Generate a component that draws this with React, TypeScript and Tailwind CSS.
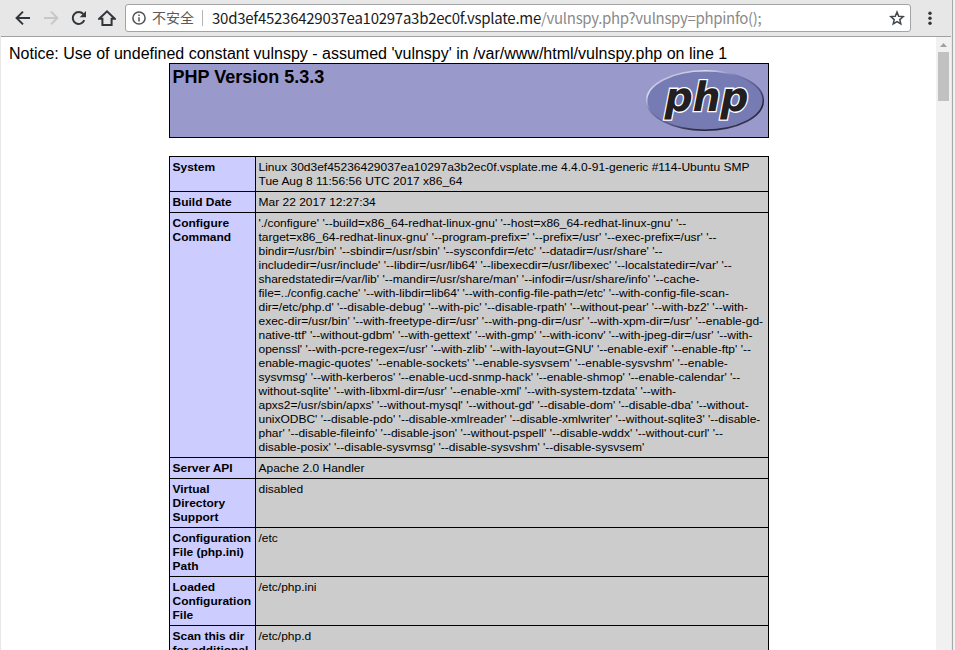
const CONFIGURE_LINES = [
  "'./configure' '--build=x86_64-redhat-linux-gnu' '--host=x86_64-redhat-linux-gnu' '--",
  "target=x86_64-redhat-linux-gnu' '--program-prefix=' '--prefix=/usr' '--exec-prefix=/usr' '--",
  "bindir=/usr/bin' '--sbindir=/usr/sbin' '--sysconfdir=/etc' '--datadir=/usr/share' '--",
  "includedir=/usr/include' '--libdir=/usr/lib64' '--libexecdir=/usr/libexec' '--localstatedir=/var' '--",
  "sharedstatedir=/var/lib' '--mandir=/usr/share/man' '--infodir=/usr/share/info' '--cache-",
  "file=../config.cache' '--with-libdir=lib64' '--with-config-file-path=/etc' '--with-config-file-scan-",
  "dir=/etc/php.d' '--disable-debug' '--with-pic' '--disable-rpath' '--without-pear' '--with-bz2' '--with-",
  "exec-dir=/usr/bin' '--with-freetype-dir=/usr' '--with-png-dir=/usr' '--with-xpm-dir=/usr' '--enable-gd-",
  "native-ttf' '--without-gdbm' '--with-gettext' '--with-gmp' '--with-iconv' '--with-jpeg-dir=/usr' '--with-",
  "openssl' '--with-pcre-regex=/usr' '--with-zlib' '--with-layout=GNU' '--enable-exif' '--enable-ftp' '--",
  "enable-magic-quotes' '--enable-sockets' '--enable-sysvsem' '--enable-sysvshm' '--enable-",
  "sysvmsg' '--with-kerberos' '--enable-ucd-snmp-hack' '--enable-shmop' '--enable-calendar' '--",
  "without-sqlite' '--with-libxml-dir=/usr' '--enable-xml' '--with-system-tzdata' '--with-",
  "apxs2=/usr/sbin/apxs' '--without-mysql' '--without-gd' '--disable-dom' '--disable-dba' '--without-",
  "unixODBC' '--disable-pdo' '--disable-xmlreader' '--disable-xmlwriter' '--without-sqlite3' '--disable-",
  "phar' '--disable-fileinfo' '--disable-json' '--without-pspell' '--disable-wddx' '--without-curl' '--",
  "disable-posix' '--disable-sysvmsg' '--disable-sysvshm' '--disable-sysvsem'",
];

const ROWS: { label: string[]; value: string[] }[] = [
  {
    label: ["System"],
    value: [
      "Linux 30d3ef45236429037ea10297a3b2ec0f.vsplate.me 4.4.0-91-generic #114-Ubuntu SMP",
      "Tue Aug 8 11:56:56 UTC 2017 x86_64",
    ],
  },
  { label: ["Build Date"], value: ["Mar 22 2017 12:27:34"] },
  { label: ["Configure", "Command"], value: CONFIGURE_LINES },
  { label: ["Server API"], value: ["Apache 2.0 Handler"] },
  { label: ["Virtual", "Directory", "Support"], value: ["disabled"] },
  { label: ["Configuration", "File (php.ini)", "Path"], value: ["/etc"] },
  { label: ["Loaded", "Configuration", "File"], value: ["/etc/php.ini"] },
  { label: ["Scan this dir", "for additional"], value: ["/etc/php.d"] },
];

function PhpLogo() {
  return (
    <svg width="120" height="67" viewBox="0 0 120 67" className="block">
      <defs>
        <linearGradient id="rim" x1="0.1" y1="0" x2="0.9" y2="1">
          <stop offset="0" stopColor="#a2a5ce" />
          <stop offset="0.2" stopColor="#dcdcee" />
          <stop offset="0.36" stopColor="#7a7eb4" />
          <stop offset="0.6" stopColor="#55568a" />
          <stop offset="0.8" stopColor="#252233" />
          <stop offset="1" stopColor="#46466b" />
        </linearGradient>
      </defs>
      <ellipse cx="60" cy="33.5" rx="58.3" ry="29.7" fill="#777bb4" stroke="url(#rim)" strokeWidth="1.6" />
      <text
        transform="translate(17.4 44.3) skewX(-11)"
        textLength="84"
        lengthAdjust="spacingAndGlyphs"
        fontFamily="DejaVu Sans, sans-serif"
        fontSize="40.5"
        fontWeight="bold"
        fill="#231f20"
        stroke="#fff"
        strokeWidth="2.6"
        paintOrder="stroke"
      >
        php
      </text>
    </svg>
  );
}

function Toolbar() {
  return (
    <header className="flex h-9 shrink-0 items-center bg-[#e7e7e7] pl-[14px] text-[#30363b]">
      <svg width="18" height="36" viewBox="0 0 18 36" fill="none" stroke="currentColor" strokeWidth="2">
        <path d="M16 18H3.3M9 11.6 2.6 18 9 24.4" />
      </svg>
      <svg width="18" height="36" viewBox="0 0 18 36" fill="none" stroke="#c6c7c8" strokeWidth="2" className="ml-[11px]">
        <path d="M1 18h12.7M8 11.6l6.4 6.4L8 24.4" />
      </svg>
      <svg width="18" height="36" viewBox="0 0 18 36" fill="none" className="ml-[9px]">
        <path d="M14.3 20.2A6 6 0 1 1 13.3 14" stroke="currentColor" strokeWidth="2" />
        <path d="M16 11v6.3H9.7z" fill="currentColor" />
      </svg>
      <svg width="18" height="36" viewBox="0 0 18 36" fill="none" stroke="currentColor" strokeWidth="2" className="ml-[10px]">
        <path d="M1.2 18.7h3.2V25h9.2v-6.3h3.2L9 11.3z" strokeLinejoin="miter" />
      </svg>
      <div className="ml-[9px] flex h-7 w-[786px] items-center rounded-[3px] border border-[#a3a3a3] bg-white pl-[6px] pr-[5px] font-['Noto_Sans_CJK_SC',sans-serif]">
        <svg width="14" height="14" viewBox="0 0 14 14" fill="none" stroke="#505357" strokeWidth="1.5">
          <circle cx="7" cy="7" r="6.1" />
          <path d="M7 6.2v4.2M7 3.5v1.6" />
        </svg>
        <span className="ml-[6px] whitespace-nowrap pb-[2px] text-[14px] leading-[24px] text-[#5a5a5a]">不安全</span>
        <span className="ml-[8px] h-4 w-px bg-[#b5b5b5]" />
        <span className="ml-[9px] whitespace-nowrap pb-[1px] text-[15px] leading-[25px] tracking-[-0.26px] text-[#1c1c1c]">
          30d3ef45236429037ea10297a3b2ec0f.vsplate.me
          <span className="tracking-[-0.32px] text-[#8a8a8a]">/vulnspy.php?vulnspy=phpinfo();</span>
        </span>
        <svg width="16" height="16" viewBox="0 0 16 16" fill="none" stroke="#42474b" strokeWidth="1.5" className="ml-auto">
          <path d="m8 2 1.7 4.2 4.5.4-3.4 3 1 4.4L8 11.7 4.2 14l1-4.4-3.4-3 4.5-.4z" />
        </svg>
      </div>
      <svg width="4" height="16" viewBox="0 0 4 16" fill="currentColor" className="ml-[17px]">
        <circle cx="2" cy="3.2" r="1.7" />
        <circle cx="2" cy="8.2" r="1.7" />
        <circle cx="2" cy="13.2" r="1.7" />
      </svg>
    </header>
  );
}

function Scrollbar() {
  return (
    <div className="flex w-[15px] shrink-0 flex-col items-center bg-[#f1f1f1]">
      <svg width="15" height="15" viewBox="0 0 15 15" fill="#a0a0a0">
        <path d="M4 10 7.5 6 11 10z" />
      </svg>
      <div className="h-[49px] w-[11px] bg-[#c1c1c1]" />
    </div>
  );
}

export default function App() {
  return (
    <div className="flex h-[650px] w-[955px] overflow-hidden bg-[#e7e7e7] font-['Liberation_Sans',Arial,sans-serif] text-black">
      <div className="flex w-[952px] shrink-0 flex-col">
        <Toolbar />
        <div className="flex min-h-0 flex-1 pl-px pr-px">
          <div className="flex min-w-0 flex-1 flex-col border-t border-[#a0a0a0] bg-white">
            <div className="flex min-h-0 flex-1">
              <main className="min-w-0 flex-1 overflow-hidden pt-[7px]">
                <p className="h-[19px] whitespace-nowrap pl-2 text-base leading-[19px]">
                  Notice: Use of undefined constant vulnspy - assumed 'vulnspy' in /var/www/html/vulnspy.php on line 1
                </p>
                <div className="ml-[168px] w-[600px]">
                  <div className="flex h-[75px] justify-between border border-black bg-[#9999cc] pl-[2.5px] pr-[3px] pt-[3px]">
                    <h1 className="text-[18px] font-bold leading-[21px]">PHP Version 5.3.3</h1>
                    <PhpLogo />
                  </div>
                  <div className="mt-[18px] border border-b-0 border-black text-[11.2px] leading-[14px]">
                    {ROWS.map((row) => (
                      <div key={row.label.join(" ")} className="flex border-b border-black">
                        <div className="w-[86px] shrink-0 whitespace-pre border-r border-black bg-[#ccccff] py-[3px] pl-[2px] font-bold">
                          <div className="w-[70px] origin-top-left translate-x-[0.5px] scale-x-[1.0714]">{row.label.join("\n")}</div>
                        </div>
                        <div className="flex-1 whitespace-pre bg-[#cccccc] py-[3px] pl-[2px]">
                          <div className="w-[472px] origin-top-left translate-x-[0.5px] scale-x-[1.0714]">{row.value.join("\n")}</div>
                        </div>
                      </div>
                    ))}
                  </div>
                </div>
              </main>
              <Scrollbar />
            </div>
          </div>
        </div>
      </div>
      <div className="w-px bg-[#a8a8a8]" />
      <div className="flex-1 bg-[#f0f0f0]" />
    </div>
  );
}
